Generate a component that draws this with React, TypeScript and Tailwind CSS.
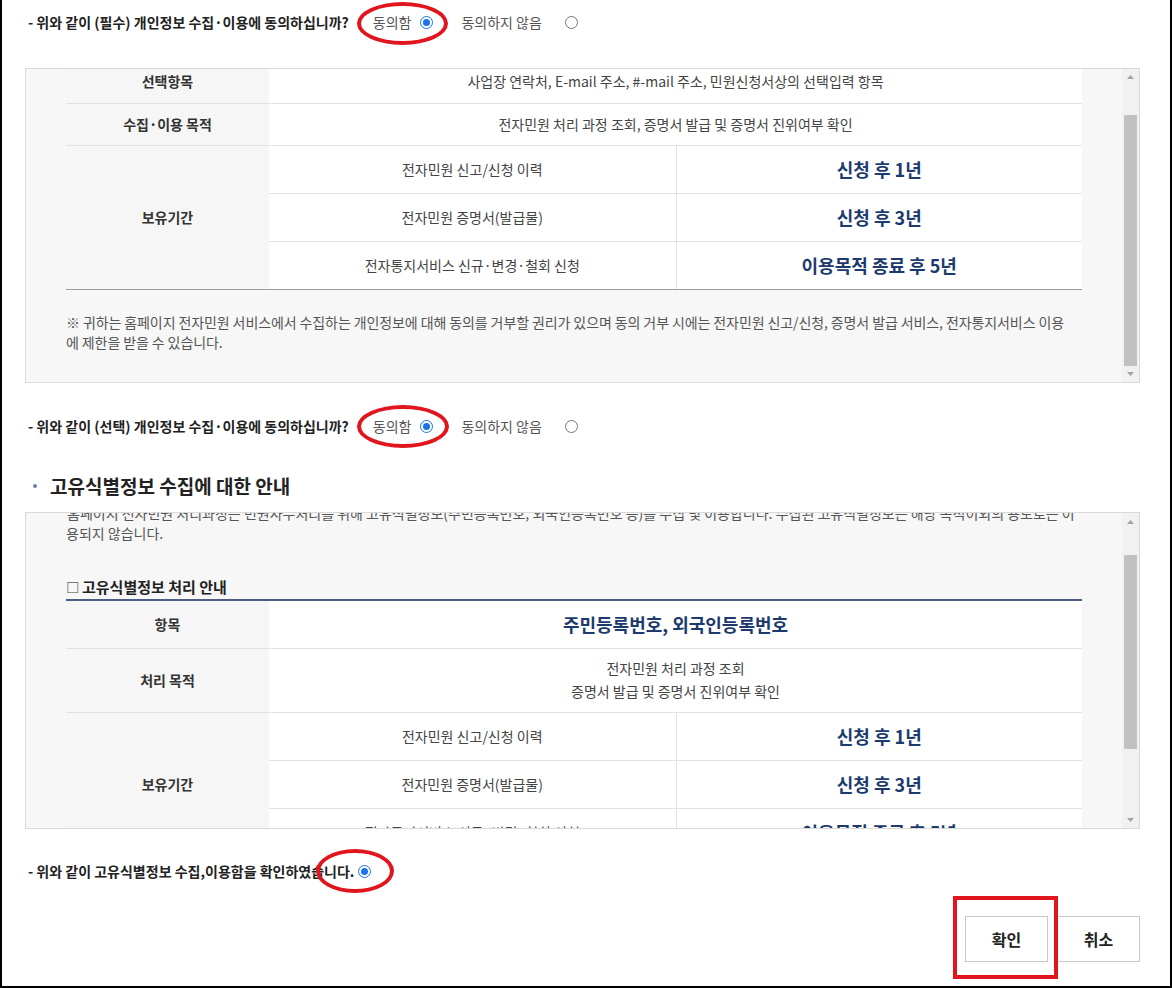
import React from 'react';

function Radio({ checked }: { checked?: boolean }) {
       if (checked) {
              return (
                     <span className="inline-flex w-[13px] h-[13px] rounded-full border-[1.5px] border-[#1a73e8] items-center justify-center bg-white">
                            <span className="w-[7px] h-[7px] rounded-full bg-[#1a73e8]" />
                     </span>
              );
       }
       return <span className="inline-block w-[13px] h-[13px] rounded-full border border-[#767676] bg-white" />;
}

function Question({ label }: { label: string }) {
       return (
              <div className="h-[44px] flex items-center pl-[3px] text-[14px]">
                     <span className="font-bold text-[#222]">{label}</span>
                     <span className="ml-[24px] text-[#555]">동의함</span>
                     <span className="ml-[9px] flex"><Radio checked /></span>
                     <span className="ml-[28px] text-[#555]">동의하지 않음</span>
                     <span className="ml-[23px] flex"><Radio /></span>
              </div>
       );
}

function Scrollbar({ thumbTop, thumbHeight }: { thumbTop: string; thumbHeight: string }) {
       return (
              <div className="w-[17px] shrink-0 bg-[#f1f1f1] flex flex-col">
                     <div className="h-[17px] flex items-center justify-center">
                            <svg width="7" height="4" viewBox="0 0 7 4"><path d="M0 4 L3.5 0 L7 4 Z" fill="#a3a3a3" /></svg>
                     </div>
                     <div className="flex-1 px-[2px]">
                            <div className={`${thumbTop} ${thumbHeight} bg-[#c1c1c1]`} />
                     </div>
                     <div className="h-[17px] flex items-center justify-center">
                            <svg width="7" height="4" viewBox="0 0 7 4"><path d="M0 0 L3.5 4 L7 0 Z" fill="#a3a3a3" /></svg>
                     </div>
              </div>
       );
}

const th = 'bg-[#f6f6f6] font-bold text-[#333] text-center border-b border-[#e2e2e2]';
const cell = 'bg-white text-center border-b border-[#e2e2e2]';
const td = `${cell} text-[#444]`;
const big = `${cell} font-bold text-[18px] text-[#1d3a6e]`;

function Retention({ last }: { last?: string }) {
       return (
              <>
                     <tr className="h-[48px]">
                            <th rowSpan={3} className={`${th} border-b-[#9c9c9c]`}>보유기간</th>
                            <td className={td}>전자민원 신고/신청 이력</td>
                            <td className={`${big} border-l`}>신청 후 1년</td>
                     </tr>
                     <tr className="h-[48px]">
                            <td className={td}>전자민원 증명서(발급물)</td>
                            <td className={`${big} border-l`}>신청 후 3년</td>
                     </tr>
                     <tr className="h-[48px]">
                            <td className={`${td} ${last ?? ''}`}>전자통지서비스 신규·변경·철회 신청</td>
                            <td className={`${big} border-l ${last ?? ''}`}>이용목적 종료 후 5년</td>
                     </tr>
              </>
       );
}

function Cols() {
       return (
              <colgroup>
                     <col className="w-[203px]" />
                     <col className="w-[407px]" />
                     <col />
              </colgroup>
       );
}

export default function App() {
       return (
              <div className="relative w-[1172px] h-[988px] bg-white border-x-2 border-b-2 border-black font-['Noto_Sans_CJK_KR','Noto_Sans',sans-serif] text-[14px] overflow-hidden">
                     <div className="pl-[23px] pr-[30px]">
                            <Question label="- 위와 같이 (필수) 개인정보 수집·이용에 동의하십니까?" />

                            {/* 필수 동의 내용 */}
                            <div className="mt-[24px] h-[315px] border border-[#d9d9d9] bg-[#f7f7f7] flex">
                                   <div className="flex-1 overflow-hidden px-[40px]">
                                          <table className="-mt-[8px] w-full table-fixed border-collapse">
                                                 <Cols />
                                                 <tbody>
                                                        <tr className="h-[42px]">
                                                               <th className={th}>선택항목</th>
                                                               <td colSpan={2} className={td}>사업장 연락처, E-mail 주소, #-mail 주소, 민원신청서상의 선택입력 항목</td>
                                                        </tr>
                                                        <tr className="h-[42px]">
                                                               <th className={th}>수집·이용 목적</th>
                                                               <td colSpan={2} className={td}>전자민원 처리 과정 조회, 증명서 발급 및 증명서 진위여부 확인</td>
                                                        </tr>
                                                        <Retention last="border-b-[#9c9c9c]" />
                                                 </tbody>
                                          </table>
                                          <p className="mt-[22px] text-[14px] leading-[20px] text-[#555] tracking-[-0.1px] whitespace-nowrap">
                                                 ※ 귀하는 홈페이지 전자민원 서비스에서 수집하는 개인정보에 대해 동의를 거부할 권리가 있으며 동의 거부 시에는 전자민원 신고/신청, 증명서 발급 서비스, 전자통지서비스 이용
                                                 <br />에 제한을 받을 수 있습니다.
                                          </p>
                                   </div>
                                   <Scrollbar thumbTop="mt-[29px]" thumbHeight="h-[251px]" />
                            </div>

                            <div className="mt-[21px]">
                                   <Question label="- 위와 같이 (선택) 개인정보 수집·이용에 동의하십니까?" />
                            </div>

                            <h2 className="mt-[24px] h-[28px] flex items-center text-[19px] font-bold text-[#222]">
                                   <span className="ml-[8px] mr-[13px] w-[4px] h-[4px] rounded-full bg-[#6f80a8]" />
                                   고유식별정보 수집에 대한 안내
                            </h2>

                            {/* 고유식별정보 */}
                            <div className="mt-[12px] h-[317px] border border-[#d9d9d9] bg-[#f7f7f7] flex">
                                   <div className="flex-1 overflow-hidden px-[40px]">
                                          <p className="-mt-[10px] -ml-[6px] leading-[20px] text-[#555] whitespace-nowrap">
                                                 ' 홈페이지 전자민원 처리과정은 민원사무처리를 위해 고유식별정보(주민등록번호, 외국인등록번호 등)를 수집 및 이용합니다. 수집된 고유식별정보는 해당 목적이외의 용도로는 이
                                                 <br /><span className="ml-[6px]">용되지 않습니다.</span>
                                          </p>
                                          <div className="mt-[34px] h-[20px] flex items-center font-bold text-[15px] text-[#222]">
                                                 <span className="font-normal text-[#777] mr-[3px]">☐</span>고유식별정보 처리 안내
                                          </div>
                                          <table className="mt-[2px] w-full table-fixed border-collapse border-t-2 border-[#4e5b83]">
                                                 <Cols />
                                                 <tbody>
                                                        <tr className="h-[48px]">
                                                               <th className={th}>항목</th>
                                                               <td colSpan={2} className={big}>주민등록번호, 외국인등록번호</td>
                                                        </tr>
                                                        <tr className="h-[64px]">
                                                               <th className={th}>처리 목적</th>
                                                               <td colSpan={2} className={`${td} leading-[23px]`}>
                                                                      전자민원 처리 과정 조회<br />증명서 발급 및 증명서 진위여부 확인
                                                               </td>
                                                        </tr>
                                                        <Retention />
                                                 </tbody>
                                          </table>
                                   </div>
                                   <Scrollbar thumbTop="mt-[25px]" thumbHeight="h-[194px]" />
                            </div>

                            <div className="mt-[20px] h-[44px] flex items-center pl-[3px]">
                                   <span className="font-bold text-[#222]">- 위와 같이 고유식별정보 수집,이용함을 확인하였습니다.</span>
                                   <span className="ml-[4px] flex"><Radio checked /></span>
                            </div>

                            <div className="mt-[23px] flex justify-end gap-[9px]">
                                   <button className="w-[83px] h-[46px] border border-[#c8c8c8] bg-white text-[16px] font-bold text-[#222]">확인</button>
                                   <button className="w-[83px] h-[46px] border border-[#c8c8c8] bg-white text-[16px] font-bold text-[#222]">취소</button>
                            </div>
                     </div>

                     {/* red annotation marks */}
                     <div className="absolute left-[355px] top-[2px] w-[91px] h-[43px] rounded-[50%] border-[4px] border-[#e0151d]" />
                     <div className="absolute left-[355px] top-[405px] w-[92px] h-[43px] rounded-[50%] border-[4px] border-[#e0151d]" />
                     <div className="absolute left-[314px] top-[849px] w-[78px] h-[44px] rounded-[50%] border-[4px] border-[#e0151d]" />
                     <div className="absolute left-[951px] top-[896px] w-[105px] h-[83px] border-[4px] border-[#e0151d]" />
              </div>
       );
}
